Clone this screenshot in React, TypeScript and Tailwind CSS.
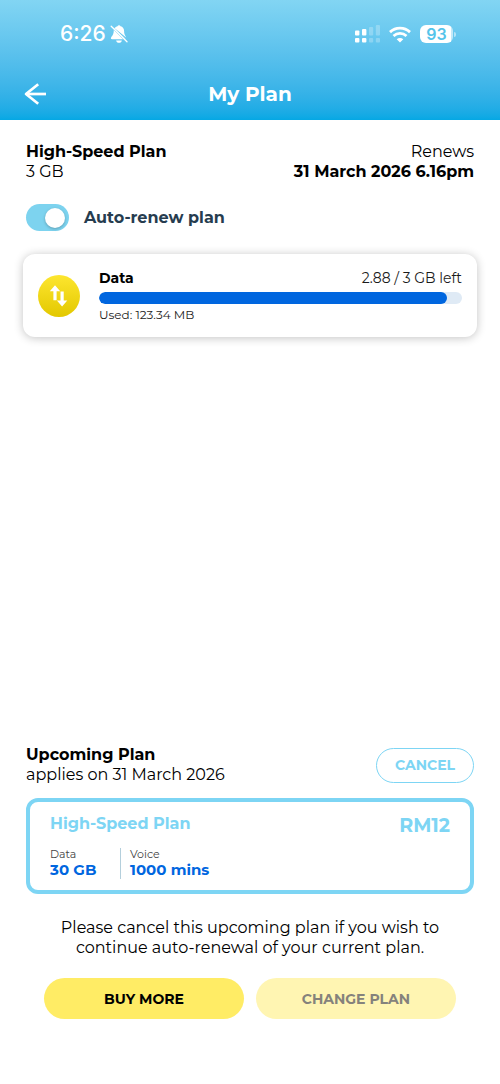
import { useState } from "react";

function StatusBar() {
  return (
    <div className="flex h-10 items-center justify-between pl-[60px] pr-11 font-['Inter',sans-serif] text-white">
      <div className="flex items-center gap-1">
        <span className="text-[21px] leading-6 font-medium">6:26</span>
        <svg className="h-[18px] w-[18px]" viewBox="0 0 18 18" fill="none" role="img" aria-label="Silent">
          <path d="M4.6 3.2C5.3 2.2 6.4 1.5 7.5 1.3C7.7.6 8.2.2 9 .2s1.3.4 1.5 1.1c2.3.5 3.6 2.4 3.6 4.7 0 2.4.5 4 1.5 5.3l.6 1.3Z" fill="currentColor" />
          <path d="M3.8 5.1C3.7 8.9 3 10 1.5 11.7.6 12.9.6 14.3 2.2 14.3H13.1Z" fill="currentColor" />
          <path d="M3.8 3.1 15.6 14.3" stroke="currentColor" strokeWidth="0.6" />
          <path d="M6.1 15.5h5.8c-.3 1.5-1.4 2.3-2.9 2.3s-2.6-.8-2.9-2.3Z" fill="currentColor" />
          <path d="M1.2 1.3 17 16.8" stroke="currentColor" strokeWidth="1.3" strokeLinecap="round" />
        </svg>
      </div>
      <div className="flex items-center gap-[9px]">
        <svg className="h-[18px] w-[26px]" viewBox="0 0 26 18" fill="currentColor" role="img" aria-label="Signal">
          <rect x="1" y="5.5" width="4.4" height="5" rx="1" />
          <rect x="8" y="4" width="4.4" height="6.5" rx="1" />
          <rect x="1" y="13" width="4.4" height="4.4" rx="1" />
          <rect x="8" y="13" width="4.4" height="4.4" rx="1" />
          <g opacity=".25">
            <rect x="15" y="2" width="4.2" height="8.5" rx="1" />
            <rect x="21.8" y="0" width="4.2" height="10.5" rx="1" />
            <rect x="15" y="13" width="4.2" height="4.4" rx="1" />
            <rect x="21.8" y="13" width="4.2" height="4.4" rx="1" />
          </g>
        </svg>
        <svg className="h-[17px] w-[22px]" viewBox="0 0 22 17" fill="none" stroke="currentColor" strokeWidth="2.8" role="img" aria-label="Wi-Fi">
          <path d="M1 6.1C6.6.9 15.4.9 21 6.1" />
          <path d="M4.5 10c3.7-3.4 9.3-3.4 13 0" />
          <path d="M7.7 13.2 11 16.6l3.3-3.4c-1.9-1.7-4.7-1.7-6.6 0Z" fill="currentColor" stroke="none" />
        </svg>
        <div className="flex items-center gap-px">
          <span className="flex h-[18px] w-[33px] items-center justify-center rounded-md bg-linear-to-r from-white from-94% to-white/60 to-94% text-base leading-none font-semibold text-[#55c4ea]">
            93
          </span>
          <span className="h-[5px] w-0.5 rounded-r-full bg-white/50" />
        </div>
      </div>
    </div>
  );
}

function Header() {
  return (
    <header className="bg-linear-to-b from-[#82d5f3] to-[#04a8e4] pt-[14px]">
      <StatusBar />
      <div className="mt-[14px] grid h-13 grid-cols-[1fr_auto_1fr] items-center px-6 pb-px">
        <a href="#back" aria-label="Back" className="w-fit text-white">
          <svg className="h-[22px] w-[23px]" viewBox="0 0 23 22" fill="none" stroke="currentColor" strokeWidth="2.7">
            <path d="M14.2 1.2 2 11l12.2 9.8" strokeLinejoin="round" />
            <path d="M2 11h20" />
          </svg>
        </a>
        <h1 className="text-xl leading-6 font-bold text-white">My Plan</h1>
      </div>
    </header>
  );
}

function UsageCard() {
  return (
    <section className="mx-[23px] mt-[23px] flex items-center gap-[19px] rounded-xl bg-white px-[15px] py-[14px] shadow-[0_1px_10px_rgba(0,0,0,0.24)]">
      <svg className="h-[42px] w-[42px] shrink-0" viewBox="0 0 42 42" aria-hidden="true">
        <defs>
          <linearGradient id="coin" x1="0" y1="0" x2="0" y2="1">
            <stop offset="0" stopColor="#fde62f" />
            <stop offset="1" stopColor="#e3c800" />
          </linearGradient>
        </defs>
        <circle cx="21" cy="21" r="21" fill="url(#coin)" />
        <path d="M17 10.2 22.2 16.2H18.6V25.2H15.4V16.2H11.8Z" fill="white" />
        <path d="M24.1 31.5 18.9 25.5H22.5V16.5H25.7V25.5H29.3Z" fill="white" />
      </svg>
      <div className="min-w-0 flex-1">
        <div className="flex justify-between text-sm leading-5">
          <h2 className="font-bold">Data</h2>
          <p className="text-[#1b1b1b]">2.88 / 3 GB left</p>
        </div>
        <div
          role="progressbar"
          aria-label="Data left"
          aria-valuemin={0}
          aria-valuemax={3}
          aria-valuenow={2.88}
          className="mt-1 h-3 overflow-hidden rounded-full bg-[#dfeaf5]"
        >
          <div className="h-full w-[96%] rounded-full bg-[#0066df]" />
        </div>
        <p className="mt-[3px] text-xs leading-4 text-[#1b1b1b]">Used: 123.34 MB</p>
      </div>
    </section>
  );
}

function UpcomingPlan() {
  return (
    <section className="px-[26px]">
      <div className="flex items-center justify-between">
        <div className="text-base leading-5">
          <h2 className="font-bold">Upcoming Plan</h2>
          <p>applies on 31 March 2026</p>
        </div>
        <button className="h-[35px] w-[98px] rounded-full border border-[#7dd5f4] text-sm font-bold text-[#7dd5f4]">
          CANCEL
        </button>
      </div>
      <div className="mt-[13px] rounded-xl border-4 border-[#7dd5f4] px-5 pt-3 pb-[11px]">
        <div className="flex justify-between text-[#7dd5f4]">
          <h3 className="text-base leading-5 font-bold">High-Speed Plan</h3>
          <p className="text-[19px] leading-6 font-bold">RM12</p>
        </div>
        <dl className="mt-[10px] flex">
          <div className="w-[71px] border-r border-[#b4cfdc] pb-px">
            <dt className="text-[11px] leading-[13px] text-[#444]">Data</dt>
            <dd className="text-[15px] leading-[17px] font-bold text-[#0066df]">30 GB</dd>
          </div>
          <div className="pl-[9px]">
            <dt className="text-[11px] leading-[13px] text-[#444]">Voice</dt>
            <dd className="text-[15px] leading-[17px] font-bold text-[#0066df]">1000 mins</dd>
          </div>
        </dl>
      </div>
    </section>
  );
}

export default function App() {
  const [autoRenew, setAutoRenew] = useState(true);
  return (
    <div className="flex min-h-screen flex-col bg-white font-['Montserrat','Inter',sans-serif] text-black">
      <Header />
      <main className="flex flex-1 flex-col pt-[22px] pb-[65px]">
        <section className="flex justify-between px-[26px] text-base leading-5">
          <div>
            <h2 className="font-bold">High-Speed Plan</h2>
            <p>3 GB</p>
          </div>
          <div className="text-right">
            <p>Renews</p>
            <p className="font-bold">31 March 2026 6.16pm</p>
          </div>
        </section>
        <label className="mt-[22px] flex w-fit items-center gap-[15px] px-[26px] text-base font-bold text-[#263c4f]">
          <input
            type="checkbox"
            role="switch"
            checked={autoRenew}
            onChange={(e) => setAutoRenew(e.target.checked)}
            className="flex h-[27px] w-[43px] appearance-none items-center rounded-full bg-gray-300 px-1 before:h-5 before:w-5 before:rounded-full before:bg-white before:shadow-[0_1px_3px_rgba(0,0,0,0.25)] checked:justify-end checked:bg-[#7dd3ef]"
          />
          Auto-renew plan
        </label>
        <UsageCard />
        <div className="mt-auto pt-8">
          <UpcomingPlan />
          <p className="mx-auto mt-6 max-w-[400px] text-center text-base leading-5">
            Please cancel this upcoming plan if you wish to continue auto-renewal of your current plan.
          </p>
          <div className="mt-5 grid grid-cols-2 gap-3 px-11 text-sm font-bold">
            <button className="h-[41px] rounded-full bg-[#ffec65]">BUY MORE</button>
            <button disabled className="h-[41px] rounded-full bg-[#fff5b2] text-[#85827c]">
              CHANGE PLAN
            </button>
          </div>
        </div>
      </main>
    </div>
  );
}
